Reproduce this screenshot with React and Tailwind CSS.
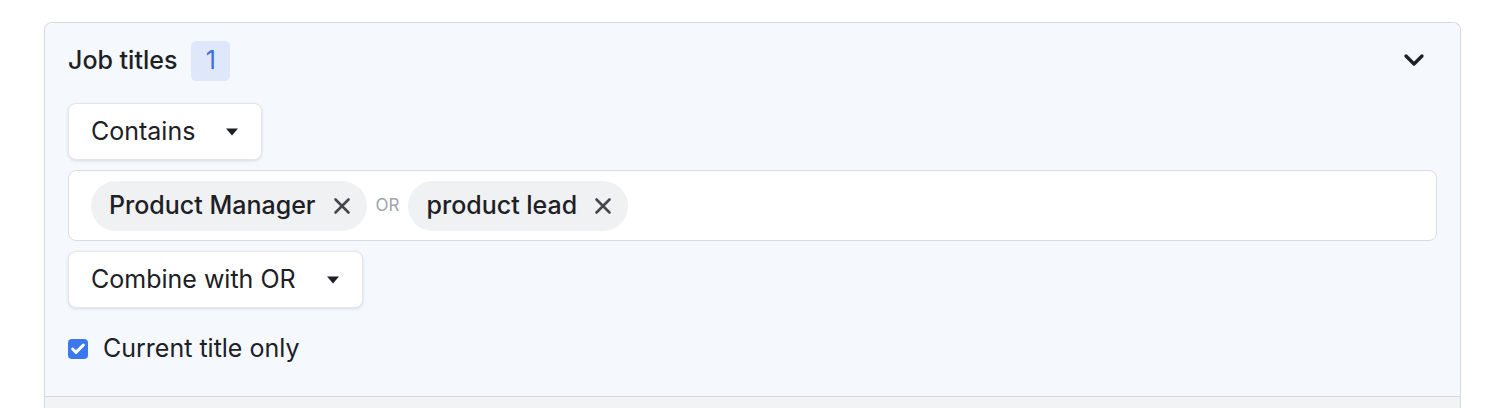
import { Check, ChevronDown, X } from 'lucide-react'

function Caret() {
  return (
    <svg width="14" height="8" viewBox="0 0 14 8" className="text-[#1d2025]">
      <path d="M1 0.5h12L7 7.5z" fill="currentColor" />
    </svg>
  )
}

function Dropdown({ label, width }) {
  return (
    <button className={`flex h-[57px] ${width} items-center justify-between rounded-lg border border-[#e3e6ea] bg-white pl-[22px] pr-[22px] text-[25px] text-[#1d2025] shadow-[0_1px_3px_rgba(16,24,40,0.12)]`}>
      <span>{label}</span>
      <Caret />
    </button>
  )
}

function Chip({ label }) {
  return (
    <div className="flex h-[50px] items-center gap-[13px] rounded-full bg-[#f0f1f3] pl-[18px] pr-[12px]">
      <span className="text-[25px] font-medium text-[#1d2025]">{label}</span>
      <X size={26} strokeWidth={2.4} className="text-[#44474d]" />
    </div>
  )
}

export default function App() {
  return (
    <div className="min-h-screen bg-white pt-[22px] pl-[44px] pr-[35px] font-['Inter','Liberation_Sans',sans-serif]">
      <div className="overflow-hidden rounded-t-lg border-x border-t border-[#d6d9de]">
        <div className="border-b border-[#d6d9de] bg-[#f5f8fd] px-[23px] pt-[18px] pb-[28px]">
          {/* Header */}
          <div className="flex h-10 items-center justify-between">
            <div className="flex items-center gap-[14px]">
              <h2 className="text-[25px] font-medium text-[#1d2025]">Job titles</h2>
              <span className="flex h-10 w-[39px] items-center justify-center rounded-[5px] bg-[#dfe8fa] text-[25px] text-[#3b6fe3]">1</span>
            </div>
            <ChevronDown size={32} strokeWidth={2.5} className="mr-[7px] -mt-[2px] text-[#1d2025]" />
          </div>

          <div className="mt-[22px] flex flex-col gap-[10px]">
            <Dropdown label="Contains" width="w-[194px]" />

            {/* Tag input */}
            <div className="flex h-[71px] items-center gap-[9px] rounded-lg border border-[#d9dce1] bg-white px-[22px]">
              <Chip label="Product Manager" />
              <span className="text-[17px] text-[#a0a4aa]">OR</span>
              <Chip label="product lead" />
            </div>

            <Dropdown label="Combine with OR" width="w-[295px]" />
          </div>

          {/* Checkbox */}
          <label className="mt-[22px] flex items-center gap-[15px]">
            <span className="flex h-5 w-5 items-center justify-center rounded-[4px] bg-[#3b78ee]">
              <Check size={16} strokeWidth={4.5} className="text-white" />
            </span>
            <span className="text-[25px] text-[#1d2025]">Current title only</span>
          </label>
        </div>
        <div className="h-[40px] bg-[#f2f3f5]" />
      </div>
    </div>
  )
}
